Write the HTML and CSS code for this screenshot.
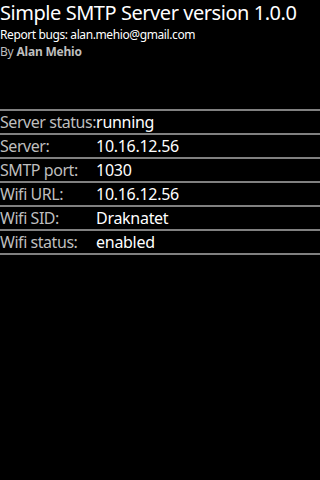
FILE: index.html
```html
<!DOCTYPE html>
<html>
<head>
<meta charset="utf-8">
<link rel="stylesheet" href="styles.css">
</head>
<body>
<div class="screen">
  <div class="title">Simple SMTP Server version 1.0.0</div>
  <div class="bugs">Report bugs: alan.mehio@gmail.com</div>
  <div class="by">By <b>Alan Mehio</b></div>
  <table class="table">
    <tr class="row"><td class="label">Server status:</td><td class="value">running</td></tr>
    <tr class="row"><td class="label">Server:</td><td class="value">10.16.12.56</td></tr>
    <tr class="row"><td class="label">SMTP port:</td><td class="value">1030</td></tr>
    <tr class="row"><td class="label">Wifi URL:</td><td class="value">10.16.12.56</td></tr>
    <tr class="row"><td class="label">Wifi SID:</td><td class="value">Draknatet</td></tr>
    <tr class="row"><td class="label">Wifi status:</td><td class="value">enabled</td></tr>
  </table>
</div>
</body>
</html>
```
FILE: styles.css
```css
html, body {
  margin: 0;
  padding: 0;
  background: #000;
  height: 100%;
}
.screen {
  font-family: "Noto Sans", "Open Sans", sans-serif;
  color: #fff;
}
.title {
  font-size: 20px;
  line-height: 26px;
  letter-spacing: -0.45px;
  white-space: nowrap;
}
.bugs {
  font-size: 12px;
  line-height: 17px;
  letter-spacing: -0.4px;
}
.by {
  font-size: 12px;
  line-height: 17px;
  letter-spacing: -0.2px;
  color: #bebebe;
}
.by b {
  font-weight: bold;
}
.table {
  margin-top: 49px;
  width: 100%;
  border-collapse: collapse;
  border-spacing: 0;
  border-bottom: 2px solid #808080;
  font-size: 16px;
  letter-spacing: -0.3px;
}
.row {
  border-top: 2px solid #808080;
}
.row td {
  padding: 0;
  height: 22px;
  line-height: 22px;
  vertical-align: middle;
}
.label {
  width: 1px;
  color: #bebebe;
  white-space: nowrap;
  letter-spacing: -0.45px;
}
.value {
  color: #fff;
}
```
